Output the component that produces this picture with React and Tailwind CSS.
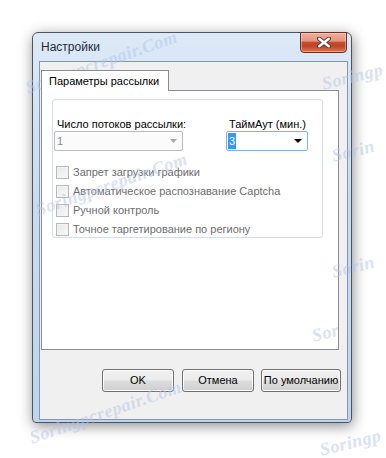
import React from "react";

const WM = ({ className, text = "Soringpcrepair.Com" }) => (
  <span
    className={
      "pointer-events-none absolute whitespace-nowrap italic font-bold text-[18px] leading-[20px] text-[#b4c6ea] opacity-50 origin-left " +
      className
    }
    style={{ fontFamily: '"Liberation Serif", serif', letterSpacing: "0.5px" }}
  >
    {text}
  </span>
);

const Btn = ({ children, className = "" }) => (
  <div
    className={
      "h-[23px] flex items-center justify-center rounded-[3px] border border-[#707070] bg-[linear-gradient(180deg,#f2f2f2_0%,#ebebeb_48%,#dddddd_52%,#cfcfcf_100%)] text-[11px] text-black shadow-[inset_0_0_0_1px_#fcfcfc] " +
      className
    }
  >
    {children}
  </div>
);

const Check = ({ label }) => (
  <div className="h-[18px] flex items-center pl-[3px] gap-[4px]">
    <div className="w-[13px] h-[13px] border border-[#b8b8b8] bg-[linear-gradient(135deg,#e8e8e8,#f8f8f8)] shadow-[inset_0_0_0_1px_#f4f4f4]" />
    <span className="text-[11px] text-[#6d6d6d] leading-[13px] whitespace-nowrap">{label}</span>
  </div>
);

export default function App() {
  return (
    <div
      className="relative w-[386px] h-[458px] bg-white overflow-hidden pt-[32px] pl-[32px]"
      style={{ fontFamily: '"Liberation Sans", Arial, sans-serif' }}
    >
      {/* window */}
      <div className="w-[320px] h-[391px] rounded-t-[6px] rounded-b-[4px] border border-[#4b5461] bg-[linear-gradient(180deg,#dce9f7_0%,#cadcf0_40%,#bfd4ec_100%)] shadow-[1px_3px_14px_rgba(0,0,0,0.45)] flex flex-col">
        {/* title bar */}
        <div className="h-[28px] flex items-start justify-between">
          <span className="pl-[8px] mt-[7px] text-[12px] leading-[14px] text-[#1e2a3a]">Настройки</span>
          <div className="-mt-[1px] mr-[4px] w-[47px] h-[21px] rounded-b-[4px] border border-[#6b3125] bg-[linear-gradient(180deg,#eeb0a0_0%,#e3957f_42%,#c84d2c_50%,#bf4326_68%,#d7765a_100%)] shadow-[inset_0_0_0_1px_rgba(255,220,210,0.45)] flex items-center justify-center">
            <svg width="14" height="11" viewBox="0 0 14 11">
              <path d="M2 1.5 L12 9.5 M12 1.5 L2 9.5" stroke="#5a3a34" strokeWidth="4.2" strokeLinecap="round" />
              <path d="M2.2 1.7 L11.8 9.3 M11.8 1.7 L2.2 9.3" stroke="#ffffff" strokeWidth="2.4" strokeLinecap="round" />
            </svg>
          </div>
        </div>

        {/* client area */}
        <div className="ml-[6px] mr-[3px] w-[309px] h-[359px] border border-[#8197b2] bg-[#f0f0f0] flex flex-col pt-[8px] pl-[1px]">
          {/* tab header */}
          <div className="relative z-10 -mb-[1px] w-[128px] h-[21px] border-t border-l border-r border-[#898c95] bg-white flex items-center pl-[7px]">
            <span className="text-[11px] leading-[13px] text-black whitespace-nowrap">Параметры рассылки</span>
          </div>
          {/* tab panel */}
          <div className="w-[298px] h-[260px] border border-[#898c95] bg-white pt-[8px] pl-[10px]">
            {/* group box */}
            <div className="w-[271px] h-[139px] rounded-[3px] border border-[#d5dfe5] pt-[17px]">
              <div className="flex">
                <div className="ml-[1px] w-[129px]">
                  <div className="pl-[3px] text-[11px] leading-[14px] text-black whitespace-nowrap">Число потоков рассылки:</div>
                  <div className="h-[20px] rounded-[2px] border border-[#b9bcc0] bg-[#fbfbfb] flex items-center justify-between pl-[2px] pr-[5px]">
                    <span className="text-[11px] text-[#8a8a8a]">1</span>
                    <svg width="7" height="4" viewBox="0 0 7 4">
                      <path d="M0 0 H7 L3.5 4 Z" fill="#a8a8a8" />
                    </svg>
                  </div>
                </div>
                <div className="ml-[43px] w-[82px]">
                  <div className="pl-[3px] text-[11px] leading-[14px] text-black whitespace-nowrap">ТаймАут (мин.)</div>
                  <div className="h-[20px] rounded-[2px] border border-[#7eb4ea] bg-white flex items-center justify-between pl-[1px] pr-[5px]">
                    <span className="h-[16px] px-[1px] bg-[#3399ff] text-white text-[11px] leading-[16px]">3</span>
                    <svg width="8" height="4" viewBox="0 0 8 4">
                      <path d="M0 0 H8 L4 4 Z" fill="#000" />
                    </svg>
                  </div>
                </div>
              </div>
              <div className="mt-[12px] flex flex-col gap-[1px]">
                <Check label="Запрет загрузки графики" />
                <Check label="Автоматическое распознавание Captcha" />
                <Check label="Ручной контроль" />
                <Check label="Точное таргетирование по региону" />
              </div>
            </div>
          </div>
          {/* buttons */}
          <div className="mt-[19px] flex justify-end pr-[6px]">
            <Btn className="w-[72px]">OK</Btn>
            <Btn className="ml-[8px] w-[72px]">Отмена</Btn>
            <Btn className="ml-[7px] w-[80px]">По умолчанию</Btn>
          </div>
        </div>
      </div>

      {/* watermarks */}
      <WM className="left-[26px] top-[78px] -rotate-[19deg]" />
      <WM className="left-[322px] top-[74px] -rotate-[14deg]" text="Soringp" />
      <WM className="left-[36px] top-[200px] -rotate-[19deg]" />
      <WM className="left-[332px] top-[146px] -rotate-[14deg]" text="Sorin" />
      <WM className="left-[332px] top-[262px] -rotate-[14deg]" text="Sorin" />
      <WM className="left-[312px] top-[326px] -rotate-[14deg]" text="Sor" />
      <WM className="left-[30px] top-[428px] -rotate-[19deg]" />
      <WM className="left-[320px] top-[440px] -rotate-[14deg]" text="Soringp" />
    </div>
  );
}
